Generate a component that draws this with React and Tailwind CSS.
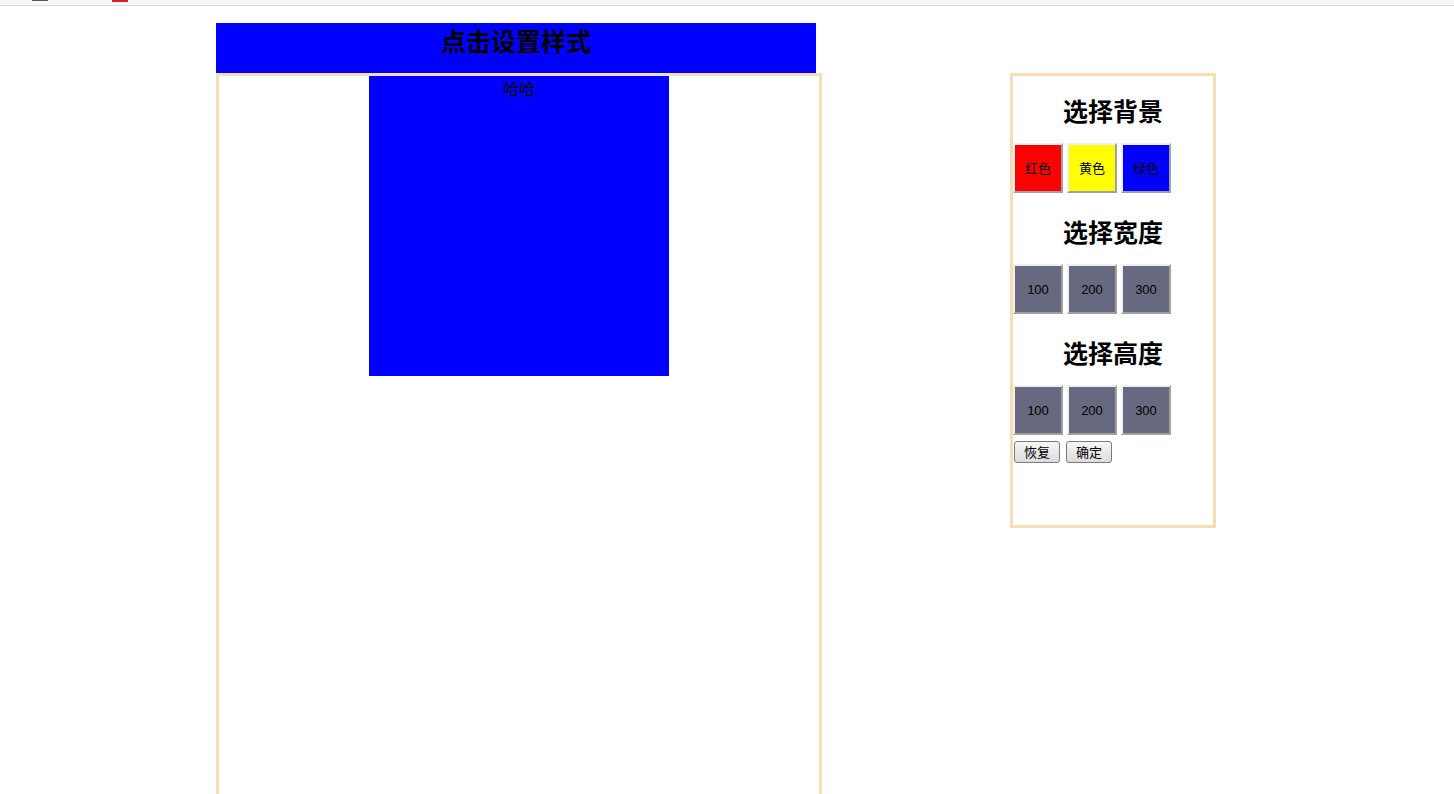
import React from "react";

const font = { fontFamily: '"Liberation Sans", "Noto Sans CJK SC", sans-serif' };

function ColorBtn({ bg, children }) {
  return (
    <button
      className="w-[50px] h-[50px] border-2 border-t-[#efefef] border-l-[#efefef] border-b-[#a0a0a0] border-r-[#a0a0a0] text-[13px] text-black flex items-center justify-center p-0 pt-[2px]"
      style={{ backgroundColor: bg }}
    >
      {children}
    </button>
  );
}

function Section({ title, items, bg }) {
  return (
    <div>
      <h2 className="mt-[20px] mb-[19px] h-[28px] leading-[32px] text-[25px] font-bold text-center text-black">
        {title}
      </h2>
      <div className="flex gap-[4px] h-[54px] items-start">
        {items.map((it, i) => (
          <ColorBtn key={i} bg={bg ? bg[i] : "#676980"}>
            {it}
          </ColorBtn>
        ))}
      </div>
    </div>
  );
}

function SmallBtn({ children }) {
  return (
    <button className="w-[46px] h-[22px] rounded-[3px] border border-[#7a7a7a] bg-gradient-to-b from-[#f6f6f6] to-[#dcdcdc] text-[13px] leading-none text-black p-0">
      {children}
    </button>
  );
}

export default function App() {
  return (
    <div className="min-h-[794px] bg-white overflow-hidden" style={font}>
      <div className="h-[6px] bg-[#f7f7f7] border-b border-[#dcdcdc] flex items-start">
        <div className="ml-[32px] w-[16px] h-[1px] bg-[#555]" />
        <div className="ml-[64px] w-[16px] h-[2px] bg-[#d2202a]" />
      </div>
      <div className="flex pt-[17px]">
        <div className="ml-[216px] w-[606px]">
          <div className="w-[600px] h-[50px] bg-[#0000ff] flex justify-center pt-[4px]">
            <h1 className="text-[25px] leading-[30px] font-bold text-black">点击设置样式</h1>
          </div>
          <div className="w-[606px] h-[760px] border-[3px] border-[#f5deb3] flex justify-center">
            <div className="w-[300px] h-[300px] bg-[#0000ff] text-center text-[16px] text-black pt-[2px]">
              哈哈
            </div>
          </div>
        </div>
        <div className="ml-[188px] mt-[50px] w-[206px] h-[455px] border-[3px] border-[#f5deb3] flex flex-col">
          <Section title="选择背景" items={["红色", "黄色", "绿色"]} bg={["#ff0000", "#ffff00", "#0000ff"]} />
          <Section title="选择宽度" items={["100", "200", "300"]} />
          <Section title="选择高度" items={["100", "200", "300"]} />
          <div className="flex gap-[6px] mt-[2px] ml-[1px]">
            <SmallBtn>恢复</SmallBtn>
            <SmallBtn>确定</SmallBtn>
          </div>
        </div>
      </div>
    </div>
  );
}
